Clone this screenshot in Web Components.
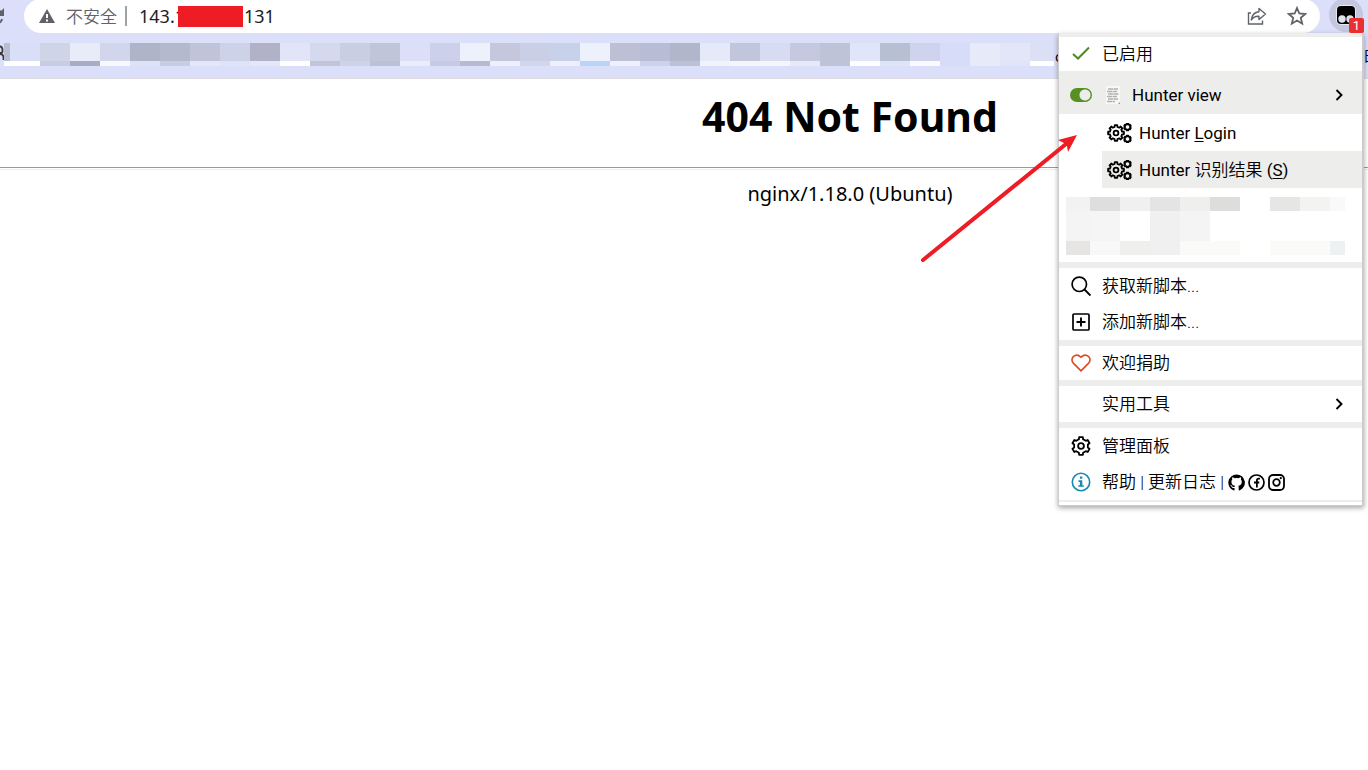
<!DOCTYPE html>
<html lang="zh-CN">
<head>
<meta charset="utf-8">
<title>404 Not Found</title>
<style>
  body { margin: 0; background: #fff; font-family: "Noto Sans", "Noto Sans CJK SC", sans-serif; color: #000; }
</style>
</head>
<body>
<browser-window></browser-window>

<script>
const define = (name, html, setup) => {
  const template = document.createElement('template');
  template.innerHTML = html;
  customElements.define(name, class extends HTMLElement {
    constructor() {
      super();
      this.attachShadow({ mode: 'open' }).append(template.content.cloneNode(true));
    }
    connectedCallback() { if (setup) setup(this, this.shadowRoot); }
  });
};

const gear = (cx, cy, r, teeth, hole, sw) => {
  const pts = [];
  const step = Math.PI * 2 / teeth;
  for (let i = 0; i < teeth; i++) {
    const a = i * step - Math.PI / 2;
    [[-.29, .78], [-.2, 1], [.2, 1], [.29, .78]].forEach(([d, k]) =>
      pts.push((cx + Math.cos(a + d * step) * r * k).toFixed(2) + ' ' + (cy + Math.sin(a + d * step) * r * k).toFixed(2)));
  }
  return `<path d="M${pts.join('L')}Z" fill="none" stroke="currentColor" stroke-width="${sw}" stroke-linejoin="round"/>` +
    (hole ? `<circle cx="${cx}" cy="${cy}" r="${hole}" fill="none" stroke="currentColor" stroke-width="${sw}"/>` : '');
};

const icons = {
  reload: [20, 20, '<path d="M16.200 12.200A7 7 0 1 1 14.800 5" fill="none" stroke="currentColor" stroke-width="2"/><path d="M18 1v8h-8z" fill="currentColor"/>'],
  site: [4, 16, '<path d="M0 1.500c2 0 2.500 2 2.500 4 .2 2-1 2.500-2.500 2.500M0 9c2 0 3.500 1 3.500 4v2" fill="none" stroke="currentColor" stroke-width="1.800"/>'],
  warning: [16, 14, '<path d="M8 0 16 14H0z" fill="currentColor"/><path d="M7 5h2v4H7zM7 10.500h2v2H7z" fill="#fff"/>'],
  share: [20, 18, '<path d="M4 6H1.500v11h14v-3.500" fill="none" stroke="currentColor" stroke-width="1.400"/><path d="M12 1.500 18.500 7 12 12.500V9.200C8.500 9 6 10.200 4.300 13 4.800 8.500 7.500 5.200 12 4.800z" fill="none" stroke="currentColor" stroke-width="1.400" stroke-linejoin="round"/>'],
  star: [20, 20, '<path d="m10 2 2.300 5.500 6 .5-4.500 3.900 1.400 5.800L10 14.600l-5.200 3.100 1.400-5.800L1.700 8l6-.5z" fill="none" stroke="currentColor" stroke-width="1.800"/>'],
  monkey: [20, 20, '<rect x="0" y="0" width="20" height="20" rx="5" fill="#fff" opacity=".6"/><rect x="1" y="1" width="18" height="18" rx="4" fill="#000"/><circle cx="6" cy="14" r="3.700" fill="#dfe3ee"/><circle cx="14" cy="14" r="3.700" fill="#dfe3ee"/>'],
  check: [20, 16, '<path d="M2 8 7 12.500 18 1.500" fill="none" stroke="currentColor" stroke-width="2"/>'],
  script: [14, 18, '<path d="M0 0h14v18H0z" fill="#f8f8f8"/><path d="M2 3h10M1 5.500h10M2 8h11M1 10.500h10M2 13h10M1 15.500h8" stroke="#b0b0b0" stroke-width="1.500" stroke-dasharray="5 .5"/><path d="m12 18 2-2v2z" fill="#999"/>'],
  gears: [26, 20, gear(9, 10, 8, 8, 2.4, 1.8) + gear(20.5, 4, 3.4, 6, 0, 1.9) + gear(20.5, 16, 3.4, 6, 0, 1.9)],
  chevron: [8, 12, '<path d="m1.500 1 5 5-5 5" fill="none" stroke="currentColor" stroke-width="1.900"/>'],
  search: [20, 20, '<circle cx="8.300" cy="8.300" r="7.200" fill="none" stroke="currentColor" stroke-width="1.700"/><path d="m13.500 13.500 6 6" stroke="currentColor" stroke-width="1.900"/>'],
  plus: [20, 20, '<rect x="2" y="2" width="16" height="16" rx="1" fill="none" stroke="currentColor" stroke-width="1.700"/><path d="M10 5.500v9M5.500 10h9" stroke="currentColor" stroke-width="1.900"/>'],
  heart: [20, 18, '<path d="M10 16.900 2.300 9.100C-1.800 4.300 4.700-2 10 3.300 15.300-2 21.800 4.300 17.700 9.100z" fill="none" stroke="currentColor" stroke-width="1.600" stroke-linejoin="round"/>'],
  cog: [20, 20, gear(10, 10, 9, 6, 2.9, 1.8)],
  info: [20, 20, '<circle cx="10" cy="10" r="8.700" fill="none" stroke="currentColor" stroke-width="1.600"/><path d="M8.900 4.500h2.400v2.200H8.900zM7.500 8.300h3.800v4.900h1.500v1.600H7.400v-1.600h1.500V9.900H7.500z" fill="currentColor"/>'],
  github: [17, 17, '<path d="M8.500.4a8.300 8.300 0 0 0-2.700 16.100c.5.100.7-.2.700-.5v-2.100c-2 .4-2.700-.5-3-1.200-.2-.5-.5-.9-.9-1.100-.4-.2-.5-.5 0-.5.8 0 1.200.7 1.400 1 .7 1.200 1.800 1 2.500.8.100-.5.300-.9.600-1.100-2-.2-3.700-1-3.700-4 0-.9.300-1.700.9-2.200-.1-.3-.4-1.100.1-2.300 0 0 .8-.2 2.200.9a8 8 0 0 1 4 0c1.500-1 2.200-.9 2.200-.9.500 1.200.2 2 .1 2.300.5.600.9 1.300.9 2.200 0 3-1.800 3.800-3.700 4 .4.300.6.800.6 1.600V16c0 .3.200.6.700.5A8.300 8.300 0 0 0 8.500.4z" fill="currentColor"/>'],
  facebook: [17, 17, '<circle cx="8.500" cy="8.500" r="7.500" fill="none" stroke="currentColor" stroke-width="1.700"/><path d="M12 4.600h-1.200c-1.300 0-1.900.7-1.900 1.900v7M6 8.500h5.300" fill="none" stroke="currentColor" stroke-width="1.800"/>'],
  instagram: [17, 17, '<rect x="1" y="1" width="15" height="15" rx="4" fill="none" stroke="currentColor" stroke-width="1.800"/><circle cx="8.500" cy="8.500" r="3.300" fill="none" stroke="currentColor" stroke-width="1.700"/><circle cx="12.800" cy="4.200" r="1.100" fill="currentColor"/>']
};

define('ui-icon', `<style>:host{display:inline-flex;flex:none} svg{display:block}</style><span></span>`, (el, root) => {
  const [w, h, art] = icons[el.getAttribute('name')];
  root.querySelector('span').innerHTML = `<svg width="${w}" height="${h}" viewBox="0 0 ${w} ${h}" aria-hidden="true">${art}</svg>`;
});

/* Grid of flat cells: "cols" holds the track widths, "rows" the heights, "colors" one hex triple per cell. */
define('pixel-grid', `<style>:host{display:grid;flex:none}</style>`, (el, root) => {
  el.style.gridTemplateColumns = el.getAttribute('cols');
  el.style.gridTemplateRows = el.getAttribute('rows');
  el.getAttribute('colors').trim().split(/\s+/).forEach(c => {
    const cell = document.createElement('i');
    cell.style.background = '#' + c;
    root.append(cell);
  });
});

define('address-bar', `
<style>
  :host{display:flex;align-items:center;height:33px;overflow:hidden}
  button{all:unset;display:flex;align-items:center;justify-content:center;color:#5f6368}
  .reload{width:6px;height:22px;justify-content:flex-end;margin-right:18px;overflow:hidden}
  .box{flex:1;display:flex;align-items:center;height:34px;box-sizing:border-box;padding:0 13px 0 15px;margin-top:-1px;background:#fff;border-radius:17px;color:#202124;font-size:18px}
  .safe{display:flex;align-items:center;gap:11px;color:#5f6368}
  .safe span{font:350 17px/24px "Noto Sans CJK SC",sans-serif}
  .rule{width:2px;height:20px;background:#9fa1a4;margin:0 12px 0 8px}
  input{border:0;outline:0;padding:0;margin:0;width:39px;background:none;font:inherit;color:inherit}
  .hide{width:65px;height:21px;background:#ee1c25}
  .tail{flex:1;padding-left:1px}
  .actions{display:flex;gap:20px}
  .ext{width:34px;height:34px;margin:-4px 5px 0 9px;border-radius:17px;background:#c3c8df}
</style>
<button class="reload" aria-label="重新加载"><ui-icon name="reload"></ui-icon></button>
<div class="box">
  <div class="safe"><ui-icon name="warning"></ui-icon><span>不安全</span></div>
  <div class="rule"></div>
  <input aria-label="地址" value="143.1"><div class="hide"></div><span class="tail">131</span>
  <div class="actions">
    <button aria-label="分享"><ui-icon name="share"></ui-icon></button>
    <button aria-label="收藏"><ui-icon name="star"></ui-icon></button>
  </div>
</div>
<button class="ext" aria-label="扩展程序"><ui-icon name="monkey"></ui-icon></button>`);

define('bookmark-bar', `
<style>
  :host{display:flex;align-items:flex-start;height:46px;padding-top:10px;box-sizing:border-box;border-bottom:1px solid #dcdce0;font-size:14px;line-height:24px;overflow:hidden}
  .cut{color:#403838;padding-top:2px}
  .peek{flex:1;padding-left:1px;line-height:28px}
  .end{width:5px;overflow:hidden;font-family:"Noto Sans CJK SC",sans-serif;white-space:nowrap}
</style>
<ui-icon class="cut" name="site"></ui-icon>
<pixel-grid cols="6px repeat(34,30px) 24px" rows="18px 5px" colors="
 b8bed0 dadff8 cfd4e6 e8ebf8 d2d6ed b0b4c8 b4bacb bfc4d8 ced2e9 b1b2c8 e1e5f7 d5d9ed cacee3 c1c5d9 dbe0f8 cdd0ea edf1fc c5c8dd cbcfe6 c7d1e9 edf1fc bdc0d5 b8bcd4 b2b6cb e5eaf9 c2c6dd d8dcf2 c5c9e0 bfc3d8 e1e5f9 b7bfd2 cfd3ee d7dcf8 e7eaf9 e2e6f7 dbe0f5
 ffffff ffffff c8cde2 a7aec4 f7f9fd dee2f7 c9cde3 e3e7f8 dfe3f8 e3e7f8 ffffff c1c5d7 cfd3e8 bdc1d6 e9ecfa c7cbe1 b8bbcf edf0fb d1d6ec edf0fb b9d4f7 eef1fb cdd2ea bdc1d8 f1f3fb f4f6fc f4f6fc e6eaf8 bfc3d8 ffffff e0e4f7 fafaff d7dcf8 e7eaf9 dfe4f8 ffffff"></pixel-grid>
<span class="peek">c</span><span class="end">日</span>`);

define('error-page', `
<style>
  :host{display:block;text-align:center}
  h1{margin:0;padding:7px 0 21px 332px;font-size:41px;line-height:60px;font-weight:700}
  hr{height:1px;margin:0;border:0;border-top:1px solid #999;border-bottom:1px solid #eee}
  p{margin:0;padding:8px 0 0 332px;font-size:20px;line-height:32px}
</style>
<h1>404 Not Found</h1><hr><p>nginx/1.18.0 (Ubuntu)</p>`);

define('menu-row', `
<style>
  :host{display:flex;align-items:center;height:36px;box-sizing:border-box;padding:0 19px 0 11px}
  :host([size="tall"]){height:43px;padding-top:4px}
  :host([size="short"]){height:34px}
  :host([size="sub"]){height:37px;margin-left:43px;padding-left:5px}
  :host([shaded]){background:#ededeb}
  .lead{display:flex;width:22px;justify-content:center;margin-right:10px;flex:none}
  :host([size="sub"]) .lead{width:26px;margin-right:6px}
  .text{flex:1;display:flex;align-items:center}
</style>
<span class="lead"><slot name="icon"></slot></span><span class="text"><slot></slot></span><slot name="end"></slot>`);

define('menu-line', `<style>:host{display:block;height:6px;background:#ededeb} :host([thin]){height:2px} :host([top]){height:4px}</style>`);

define('script-menu', `
<style>
  :host{display:block;box-sizing:border-box;width:306px;padding-bottom:3px;background:#fff;border:solid #ccc;border-width:0 2px 1px 1px;box-shadow:0 2px 5px rgba(0,0,0,.35);font:17px/24px Roboto,"Noto Sans CJK SC",sans-serif;color:#000}
  button,a{all:unset;white-space:pre}
  .zh{font-weight:350}
  .green{color:#4d8a1d} .red{color:#dc4a22} .blue{color:#1689b5}
  input{appearance:none;margin:0;width:22px;height:14px;border-radius:7px;background:radial-gradient(circle at 15px 7px,#ededeb 5px,transparent 6px),#578f23}
  .name{display:flex;align-items:center;gap:12px;padding-left:4px}
  pixel-grid{padding:9px 7px 7px}
  u{text-underline-offset:2px;text-decoration-thickness:1px}
  .links{display:flex;align-items:center;gap:3px}
  .links a{display:flex}
</style>
<menu-line top></menu-line>
<menu-row class="zh" size="short"><ui-icon slot="icon" class="green" name="check"></ui-icon><button>已启用</button></menu-row>
<menu-row size="tall" shaded><input slot="icon" type="checkbox" role="switch" aria-label="Hunter view" checked><button class="name"><ui-icon name="script"></ui-icon>Hunter view</button><ui-icon slot="end" name="chevron"></ui-icon></menu-row>
<menu-row size="sub"><ui-icon slot="icon" name="gears"></ui-icon><button>Hunter <u>L</u>ogin</button></menu-row>
<menu-row size="sub" shaded><ui-icon slot="icon" name="gears"></ui-icon><button>Hunter <span class="zh">识别结果</span> (<u>S</u>)</button></menu-row>
<pixel-grid cols="24px repeat(8,30px) 15px" rows="14px 30px 14px" colors="
 f2f2f2 dedede f0f0f0 e4e4e4 efefed dddddb ffffff e6e6e4 f3f3f1 f9f9f9
 f4f4f4 f5f5f5 ffffff f0f0f0 f4f4f4 ffffff ffffff ffffff ffffff ffffff
 e6e5e4 f8f8f8 efefee f0f0f1 fafaf9 fafaf9 ffffff fafaf9 fafaf9 eef1f1"></pixel-grid>
<menu-line></menu-line>
<menu-row class="zh"><ui-icon slot="icon" name="search"></ui-icon><button>获取新脚本...</button></menu-row>
<menu-row class="zh"><ui-icon slot="icon" name="plus"></ui-icon><button>添加新脚本...</button></menu-row>
<menu-line></menu-line>
<menu-row class="zh" size="short"><ui-icon slot="icon" class="red" name="heart"></ui-icon><button>欢迎捐助</button></menu-row>
<menu-line></menu-line>
<menu-row class="zh" size="mid"><button>实用工具</button><ui-icon slot="end" name="chevron"></ui-icon></menu-row>
<menu-line></menu-line>
<menu-row class="zh"><ui-icon slot="icon" name="cog"></ui-icon><button>管理面板</button></menu-row>
<menu-row class="zh"><ui-icon slot="icon" class="blue" name="info"></ui-icon><a href="#help">帮助</a><span>&nbsp;|&nbsp;</span><a href="#changes">更新日志</a><span>&nbsp;|&nbsp;</span><span class="links"><a href="#github" aria-label="GitHub"><ui-icon name="github"></ui-icon></a><a href="#facebook" aria-label="Facebook"><ui-icon name="facebook"></ui-icon></a><a href="#instagram" aria-label="Instagram"><ui-icon name="instagram"></ui-icon></a></span></menu-row>
<menu-line thin></menu-line>`);

define('browser-window', `
<style>
  :host{display:block;position:relative;min-height:100vh}
  header{background:#dbdff9}
  script-menu{position:absolute;top:33px;right:4px}
  .badge{position:absolute;top:18px;right:4px;width:15px;height:15px;border-radius:2px;background:#ea2f33;color:#fff;font:13px/15px Roboto,sans-serif;text-align:center}
  .arrow{position:absolute;top:130px;right:288px}
</style>
<header><address-bar></address-bar><bookmark-bar></bookmark-bar></header>
<error-page></error-page>
<script-menu></script-menu>
<span class="badge">1</span>
<svg class="arrow" width="160" height="136" viewBox="0 0 160 136" aria-hidden="true"><path d="M3 130 146 14" stroke="#ee1c25" stroke-width="4" stroke-linecap="round"/><path d="M157 5 138 10 144 13 147 16 148 22z" fill="#ee1c25"/></svg>`);
</script>
</body>
</html>
